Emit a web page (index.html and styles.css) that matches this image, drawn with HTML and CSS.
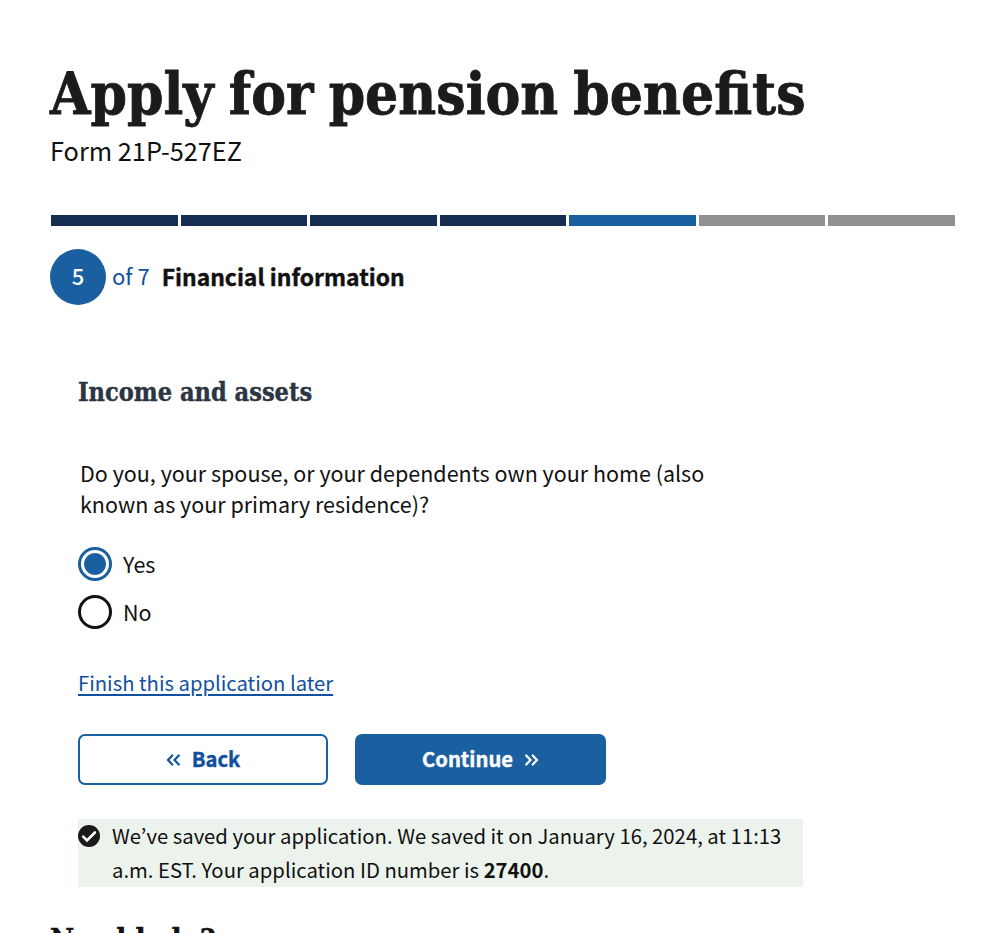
FILE: index.html
```html
<!DOCTYPE html>
<html lang="en">
<head>
<meta charset="utf-8">
<title>Apply for pension benefits</title>
<link rel="stylesheet" href="styles.css">
</head>
<body>
<main class="page">
  <h1 class="title">Apply for pension benefits</h1>
  <p class="form-number">Form 21P-527EZ</p>
  <div class="progress">
    <span class="segment done"></span><span class="segment done"></span><span class="segment done"></span><span class="segment done"></span><span class="segment current"></span><span class="segment"></span><span class="segment"></span>
  </div>
  <div class="step">
    <span class="step-circle">5</span>
    <span class="step-total">of 7</span>
    <h2 class="step-name">Financial information</h2>
  </div>
  <form class="form">
    <h3 class="section-title">Income and assets</h3>
    <p class="question">Do you, your spouse, or your dependents own your home (also<br>known as your primary residence)?</p>
    <div class="options">
      <label class="option"><span class="radio checked"></span><span class="option-text">Yes</span></label>
      <label class="option"><span class="radio"></span><span class="option-text">No</span></label>
    </div>
    <a class="finish-link">Finish this application later</a>
    <div class="buttons">
      <button type="button" class="button secondary"><svg class="chevrons" viewBox="0 0 14 12"><path d="M6.3 1.5 2 6l4.3 4.5M12.8 1.5 8.5 6l4.3 4.5"/></svg><span>Back</span></button>
      <button type="button" class="button primary"><span>Continue</span><svg class="chevrons" viewBox="0 0 14 12"><path d="M1.2 1.5 5.5 6l-4.3 4.5M7.7 1.5 12 6l-4.3 4.5"/></svg></button>
    </div>
    <div class="alert">
      <svg class="check" viewBox="0 0 22 22"><circle cx="11" cy="11" r="11"/><path d="m5.2 11.6 3.8 3.8 7.9-7.9"/></svg>
      <p class="alert-text">We’ve saved your application. We saved it on January 16, 2024, at 11:13<br>a.m. EST. Your application ID number is <strong>27400</strong>.</p>
    </div>
  </form>
  <h2 class="help">Need help?</h2>
</main>
</body>
</html>
```
FILE: styles.css
```css
* { box-sizing: border-box; }
html, body { margin: 0; height: 933px; overflow: hidden; background: #fff; }
body { font-family: "Noto Sans CJK KR", "Noto Sans", sans-serif; font-size: 21.5px; color: #111; }
h1, h2, h3, p { margin: 0; }
.page { padding: 60px 45px 0 50px; height: 933px; overflow: hidden; }
.title { font-family: "DejaVu Serif Condensed", "DejaVu Serif", serif; font-stretch: condensed; font-size: 58px; font-weight: 700; line-height: 68px; word-spacing: -3px; white-space: nowrap; color: #1b1b1b; -webkit-text-stroke: 0.8px #1b1b1b; }
.form-number { font-size: 25.3px; line-height: 36px; margin-top: 4px; white-space: nowrap; }
.progress { display: flex; gap: 3px; margin: 46.5px 0.5px 0 1px; }
.segment { flex: 1; height: 11px; background: #919191; }
.done { background: #162e51; }
.current { background: #1a5fa0; }
.step { display: flex; align-items: center; height: 56px; margin-top: 23.5px; white-space: nowrap; }
.step-circle { width: 56px; height: 56px; border-radius: 50%; background: #1a5fa0; color: #fff; font-size: 22px; font-weight: 500; line-height: 52px; text-align: center; }
.step-total { margin: -4px 0 0 6px; font-size: 22px; color: #1150a0; }
.step-name { margin: -3px 0 0 12px; font-size: 22.9px; font-weight: 700; -webkit-text-stroke: 0.4px; }
.form { margin-left: 28px; padding-top: 70px; }
.section-title { font-family: "DejaVu Serif Condensed", "DejaVu Serif", serif; font-stretch: condensed; font-size: 25.1px; line-height: 34px; color: #2c3643; white-space: nowrap; -webkit-text-stroke: 0.4px; }
.question { margin: 48px 0 0 2px; line-height: 31px; white-space: nowrap; }
.options { display: flex; flex-direction: column; gap: 14px; margin-top: 28px; }
.option { display: flex; align-items: center; gap: 11px; height: 34px; }
.option-text { margin-top: -2px; }
.radio { width: 34px; height: 34px; border: 3px solid #111; border-radius: 50%; }
.checked { border-color: #1a5fa0; background: #1a5fa0; background-clip: content-box; padding: 2.7px; }
.finish-link { display: block; width: max-content; margin-top: 37px; font-size: 20.25px; line-height: 34px; color: #1150a0; text-decoration: underline; text-decoration-thickness: 2px; text-underline-offset: 3px; }
.buttons { display: flex; gap: 27px; margin-top: 34px; }
.button { display: flex; justify-content: center; align-items: center; gap: 12px; width: 250px; height: 51px; border: 0; border-radius: 7px; padding: 0 0 2px; font: 700 20.2px "Noto Sans CJK KR", sans-serif; -webkit-text-stroke: 0.4px; }
.primary { background: #1a5fa0; color: #fff; width: 251px; }
.secondary { background: #fff; color: #1150a0; border: 2.5px solid #1a5fa0; }
.chevrons { width: 14px; height: 12px; margin-top: 3px; fill: none; stroke: currentColor; stroke-width: 2.2; stroke-linecap: round; }
.alert { display: flex; width: 725px; height: 68px; margin-top: 34px; background: #ecf3ec; }
.check { flex: none; width: 22px; height: 22px; margin-top: 6px; fill: #1b1b1b; }
.check path { fill: none; stroke: #fff; stroke-width: 2.6; stroke-linecap: round; }
.alert-text { margin: -1px 0 0 12px; font-size: 20.3px; line-height: 34px; white-space: nowrap; }
.help { margin-top: 35px; font-family: "DejaVu Serif Condensed", "DejaVu Serif", serif; font-stretch: condensed; font-size: 29.4px; line-height: 36px; white-space: nowrap; -webkit-text-stroke: 0.5px; }
```
